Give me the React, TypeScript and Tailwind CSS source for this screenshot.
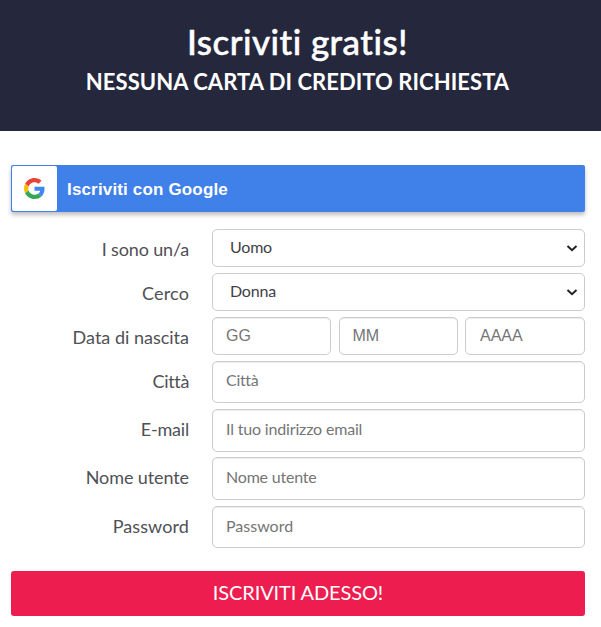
import React from "react";

const base = "font-['Lato','Liberation_Sans',sans-serif] [font-variant-ligatures:none]";

function Label({ text, className }: { text: string; className: string }) {
  return (
    <label className={`w-[189px] shrink-0 text-right whitespace-nowrap text-[18px] leading-6 text-[#505055] ${className}`}>
      {text}
    </label>
  );
}

function Select({ value, className }: { value: string; className: string }) {
  return (
    <div className="relative h-[38px] w-[373px]">
      <select
        className={`h-full w-full appearance-none rounded-[5px] border border-[#cccccc] bg-white pl-[17px] text-[16px] text-[#3f3f46] ${className}`}
      >
        <option>{value}</option>
      </select>
      <svg className="pointer-events-none absolute right-[7px] top-[15px]" width="12" height="9" viewBox="0 0 12 9" fill="none">
        <path d="M1.5 2L6 6.2L10.5 2" stroke="#222" strokeWidth="2" />
      </svg>
    </div>
  );
}

function Field({ placeholder, className }: { placeholder: string; className: string }) {
  return (
    <input
      placeholder={placeholder}
      className={`w-[373px] rounded-[5px] border border-[#cccccc] bg-white px-[13px] text-[16px] shadow-[inset_0_1px_1px_rgba(0,0,0,0.075)] placeholder:text-[#757575] ${className}`}
    />
  );
}

function DateField({ placeholder, className }: { placeholder: string; className: string }) {
  return (
    <input
      placeholder={placeholder}
      className={`h-[38px] rounded-[5px] border border-[#cccccc] bg-white pb-px font-['Liberation_Sans',Arial,sans-serif] text-[16px] shadow-[inset_0_1px_1px_rgba(0,0,0,0.075)] placeholder:text-[#757575] ${className}`}
    />
  );
}

function GoogleLogo() {
  return (
    <svg width="21" height="21" viewBox="0 0 48 48">
      <path fill="#EA4335" d="M24 9.5c3.54 0 6.71 1.22 9.21 3.6l6.85-6.85C35.9 2.38 30.47 0 24 0 14.62 0 6.51 5.38 2.56 13.22l7.98 6.19C12.43 13.72 17.74 9.5 24 9.5z" />
      <path fill="#4285F4" d="M46.98 24.55c0-1.57-.15-3.09-.38-4.55H24v9.02h12.94c-.58 2.96-2.26 5.48-4.78 7.18l7.73 6c4.51-4.18 7.09-10.36 7.09-17.65z" />
      <path fill="#FBBC05" d="M10.53 28.59c-.48-1.45-.76-2.99-.76-4.59s.27-3.14.76-4.59l-7.98-6.19C.92 16.46 0 20.12 0 24c0 3.88.92 7.54 2.56 10.78l7.97-6.19z" />
      <path fill="#34A853" d="M24 48c6.48 0 11.93-2.13 15.89-5.81l-7.73-6c-2.15 1.45-4.92 2.3-8.16 2.3-6.26 0-11.57-4.22-13.47-9.91l-7.98 6.19C6.51 42.62 14.62 48 24 48z" />
    </svg>
  );
}

export default function App() {
  return (
    <main className={`h-[627px] w-[601px] overflow-hidden bg-white ${base}`}>
      <header className="flex h-[131px] flex-col items-center bg-[#25273d] pt-[20px] pr-[6px] text-white">
        <h1 className="whitespace-nowrap text-[35px] font-medium leading-[42px] tracking-[0.45px] [-webkit-text-stroke:0.5px_white]">Iscriviti gratis!</h1>
        <h2 className="whitespace-nowrap text-[22px] font-bold leading-[40px] tracking-[0.06px]">NESSUNA CARTA DI CREDITO RICHIESTA</h2>
      </header>

      <button className="ml-[11px] mt-[34px] flex h-[47px] w-[574px] items-center rounded-[2px] bg-[#4080e9] p-px text-left shadow-[0_3px_4px_rgba(0,0,0,0.25)]">
        <span className="flex h-[45px] w-[45px] items-center justify-center rounded-[2px] bg-white">
          <GoogleLogo />
        </span>
        <span className="pl-[10px] pt-[3px] font-['Liberation_Sans',Arial,sans-serif] text-[17px] font-bold tracking-[0.16px] text-white">Iscriviti con Google</span>
      </button>

      <form className="mt-[17px] flex flex-col">
        <div className="flex h-[44px] gap-[23px]">
          <Label text="I sono un/a" className="pt-[8px] tracking-[-0.15px]" />
          <Select value="Uomo" className="pb-[2px] tracking-[-0.2px]" />
        </div>
        <div className="flex h-[44px] gap-[23px]">
          <Label text="Cerco" className="pt-[8px] tracking-[0.15px]" />
          <Select value="Donna" className="pb-[3px] tracking-[-0.2px]" />
        </div>
        <div className="flex h-[44px] gap-[23px]">
          <Label text="Data di nascita" className="pt-[8px]" />
          <div className="flex w-[373px] justify-between">
            <DateField placeholder="GG" className="w-[119px] px-[13px]" />
            <DateField placeholder="MM" className="w-[119px] px-[13px]" />
            <DateField placeholder="AAAA" className="w-[120px] px-[14px]" />
          </div>
        </div>
        <div className="flex h-[48px] gap-[23px]">
          <Label text="Città" className="pt-[8px] tracking-[-0.35px]" />
          <Field placeholder="Città" className="h-[42px] pb-[5px] tracking-[-0.3px]" />
        </div>
        <div className="flex h-[48px] gap-[23px]">
          <Label text="E-mail" className="pt-[8px] tracking-[-0.2px]" />
          <Field placeholder="Il tuo indirizzo email" className="h-[43px] pb-[4px] tracking-[-0.17px]" />
        </div>
        <div className="flex h-[49px] gap-[23px]">
          <Label text="Nome utente" className="pt-[8px] tracking-[-0.1px]" />
          <Field placeholder="Nome utente" className="h-[43px] pb-[4px] tracking-[-0.2px]" />
        </div>
        <div className="flex h-[42px] gap-[23px]">
          <Label text="Password" className="pt-[8px] tracking-[0.1px]" />
          <Field placeholder="Password" className="h-[42px] pb-[3px]" />
        </div>
        <button
          type="button"
          className="ml-[11px] mt-[23px] h-[45px] w-[574px] rounded-[3px] bg-[#ee1d50] pb-[4px] text-[20px] font-normal tracking-[-0.12px] text-white"
        >
          ISCRIVITI ADESSO!
        </button>
      </form>
    </main>
  );
}
